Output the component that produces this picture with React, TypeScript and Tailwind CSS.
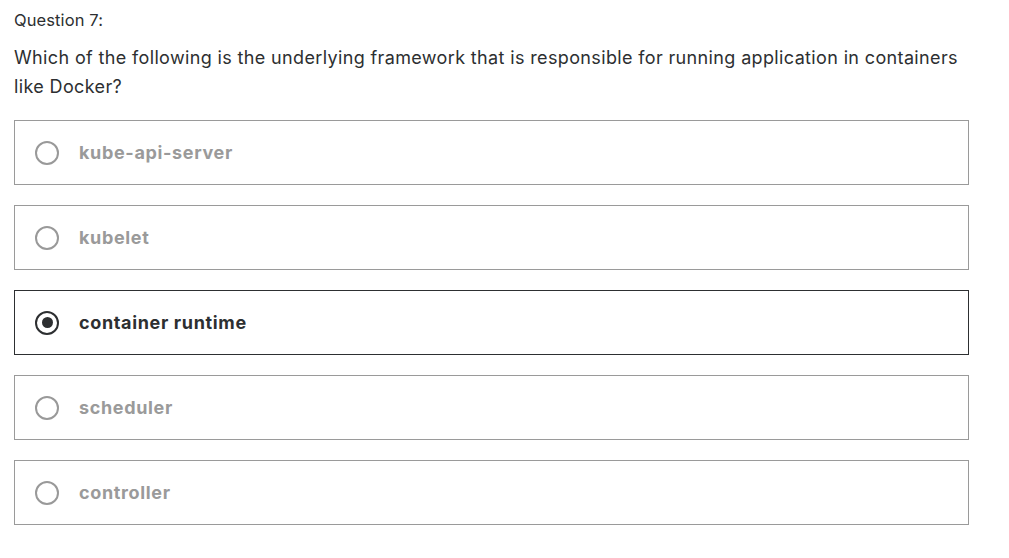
import React from "react";

const options = [
  { label: "kube-api-server", selected: false },
  { label: "kubelet", selected: false },
  { label: "container runtime", selected: true },
  { label: "scheduler", selected: false },
  { label: "controller", selected: false },
];

export default function App() {
  return (
    <div className="bg-white w-[1009px] h-[558px] pl-[14px] pt-[8px] text-[#2d2f31]" style={{ fontFamily: "Inter, 'Noto Sans', sans-serif" }}>
      <div className="w-[955px]">
        <div className="text-[16.5px] leading-[24px] tracking-[0.1px]">Question 7:</div>
        <div className="text-[18px] leading-[29px] mt-[11px] tracking-[0.36px]">
          Which of the following is the underlying framework that is responsible for running application in containers like Docker?
        </div>
        <div className="flex flex-col gap-[20px] mt-[19px]">
          {options.map((o) => (
            <div
              key={o.label}
              className={
                "h-[65px] flex items-center pl-[20px] border " +
                (o.selected ? "border-[#2d2f31]" : "border-[#9a9a9a]")
              }
            >
              {o.selected ? (
                <div className="w-[24px] h-[24px] rounded-full border-[2.5px] border-[#2d2f31] flex items-center justify-center">
                  <div className="w-[11px] h-[11px] rounded-full bg-[#2d2f31]" />
                </div>
              ) : (
                <div className="w-[24px] h-[24px] rounded-full border-[2px] border-[#999999]" />
              )}
              <span
                className={
                  "ml-[20px] text-[18px] font-bold tracking-[0.65px] " +
                  (o.selected ? "text-[#2d2f31]" : "text-[#9a9a9a]")
                }
              >
                {o.label}
              </span>
            </div>
          ))}
        </div>
      </div>
    </div>
  );
}
